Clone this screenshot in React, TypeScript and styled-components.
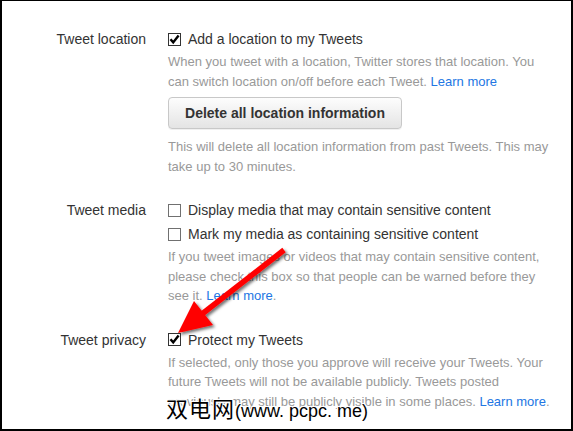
import React, { FC } from "react";
import styled, { createGlobalStyle } from "styled-components";

const GlobalStyle = createGlobalStyle`
  html, body {
    margin: 0;
    padding: 0;
    background: #fff;
  }
  body {
    font-family: "Liberation Sans", Arial, sans-serif;
  }
`;

const Frame = styled.div`
  position: relative;
  box-sizing: border-box;
  width: 573px;
  height: 431px;
  overflow: hidden;
  border: 2px solid #000;
  border-top-width: 1px;
  background: #fff;
  padding-top: 28px;
`;

const Section = styled.div`
  display: grid;
  grid-template-columns: 144px 386px;
  column-gap: 22px;
  margin-bottom: 24px;
`;

const Label = styled.div`
  text-align: right;
  font-size: 14px;
  line-height: 20px;
  color: #333;
`;

const Controls = styled.div`
  display: flex;
  flex-direction: column;
`;

const CheckRow = styled.label<{ $spaced?: boolean }>`
  display: flex;
  align-items: center;
  gap: 7px;
  font-size: 14px;
  line-height: 20px;
  color: #333;
  margin-top: ${(p) => (p.$spaced ? "4px" : "0")};
`;

const Box = styled.span<{ $checked?: boolean }>`
  box-sizing: border-box;
  width: 13px;
  height: 13px;
  flex: none;
  border: 1px solid ${(p) => (p.$checked ? "#333" : "#707070")};
  background: #fff;
  display: flex;
  align-items: center;
  justify-content: center;
`;

const Help = styled.p<{ $top: number }>`
  margin: ${(p) => p.$top}px 0 0;
  font-size: 13px;
  line-height: 19.5px;
  color: #999;
`;

const Link = styled.a`
  color: #2276e3;
  text-decoration: none;
`;

const Button = styled.button`
  align-self: flex-start;
  box-sizing: border-box;
  margin-top: 6px;
  height: 32px;
  width: 234px;
  padding: 0 12px;
  border: 1px solid #c8c8c8;
  border-radius: 4px;
  background: linear-gradient(#fdfdfd, #e4e4e4);
  box-shadow: 0 1px 0 rgba(0, 0, 0, 0.06);
  font-family: "Liberation Sans", Arial, sans-serif;
  font-weight: bold;
  font-size: 14px;
  color: #333;
`;

const ArrowLayer = styled.svg`
  position: absolute;
  left: 0;
  top: 0;
  pointer-events: none;
`;

const Watermark = styled.div`
  position: absolute;
  left: 164px;
  top: 394px;
  display: flex;
  align-items: baseline;
  font-family: "Liberation Sans", "Noto Sans CJK SC", sans-serif;
  font-size: 18px;
  line-height: 24px;
  color: #000;
  white-space: nowrap;
  text-shadow: 1px 0 0 #fff, -1px 0 0 #fff, 0 1px 0 #fff, 0 -1px 0 #fff,
    1px 1px 0 #fff, -1px -1px 0 #fff, 1px -1px 0 #fff, -1px 1px 0 #fff;
`;

const WatermarkHan = styled.span`
  font-family: "Noto Sans CJK SC", sans-serif;
  font-size: 22px;
  letter-spacing: 1px;
`;

const Check: FC<{ checked?: boolean }> = ({ checked }) => (
  <Box $checked={checked}>
    {checked && (
      <svg width="11" height="11" viewBox="0 0 11 11">
        <path d="M1.5 5.3 L4.2 8.4 L9.6 1.6" fill="none" stroke="#000" strokeWidth="2.4" />
      </svg>
    )}
  </Box>
);

const App: FC = () => (
  <>
    <GlobalStyle />
    <Frame>
      <Section>
        <Label>Tweet location</Label>
        <Controls>
          <CheckRow>
            <Check checked />
            Add a location to my Tweets
          </CheckRow>
          <Help $top={3}>
            When you tweet with a location, Twitter stores that location. You can switch
            location on/off before each Tweet. <Link href="#">Learn more</Link>
          </Help>
          <Button>Delete all location information</Button>
          <Help $top={8}>
            This will delete all location information from past Tweets. This may take up to
            30 minutes.
          </Help>
        </Controls>
      </Section>

      <Section>
        <Label>Tweet media</Label>
        <Controls>
          <CheckRow>
            <Check />
            Display media that may contain sensitive content
          </CheckRow>
          <CheckRow $spaced>
            <Check />
            Mark my media as containing sensitive content
          </CheckRow>
          <Help $top={3}>
            If you tweet images or videos that may contain sensitive content, please check
            this box so that people can be warned before they see it.{" "}
            <Link href="#">Learn more</Link>.
          </Help>
        </Controls>
      </Section>

      <Section>
        <Label>Tweet privacy</Label>
        <Controls>
          <CheckRow>
            <Check checked />
            Protect my Tweets
          </CheckRow>
          <Help $top={3}>
            If selected, only those you approve will receive your Tweets. Your future Tweets
            will not be available publicly. Tweets posted previously may still be publicly
            visible in some places. <Link href="#">Learn more</Link>.
          </Help>
        </Controls>
      </Section>

      <ArrowLayer width="573" height="431" viewBox="0 0 573 431">
        <defs>
          <filter id="shade" x="-20%" y="-20%" width="140%" height="140%">
            <feDropShadow dx="2" dy="2" stdDeviation="1.5" floodColor="#000" floodOpacity="0.55" />
          </filter>
        </defs>
        <g filter="url(#shade)" fill="#f00">
          <line x1="282" y1="249" x2="200" y2="313" stroke="#f00" strokeWidth="5.5" />
          <polygon points="176,332 192,300 211,324" />
        </g>
      </ArrowLayer>

      <Watermark>
        <WatermarkHan>双电网</WatermarkHan>(www. pcpc. me)
      </Watermark>
    </Frame>
  </>
);

export default App;
